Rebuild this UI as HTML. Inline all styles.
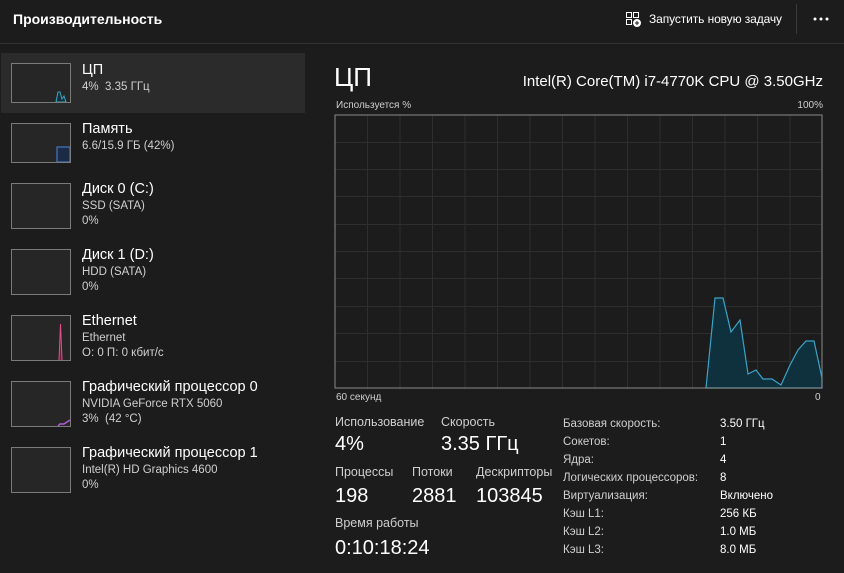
<!DOCTYPE html>
<html><head><meta charset="utf-8"><style>
*{margin:0;padding:0;box-sizing:border-box}
body{width:844px;height:573px;background:#1c1c1c;color:#fff;font-family:"Liberation Sans",sans-serif;position:relative;overflow:hidden}
.a{position:absolute;white-space:nowrap}
.th{position:absolute;left:11px;width:60px;border:1px solid #7a7a7a;background:#262626;overflow:hidden}
.t{font-size:14.5px;color:#fff}
.s{font-size:11.5px;color:#d0d0d0}
.lab{font-size:12.5px;color:#cfcfcf}
.big{font-size:20px;color:#fff}
.k{font-size:11.5px;color:#cfcfcf}
.v{font-size:11.5px;color:#fff}
</style></head><body>
<div class="a" style="left:13px;top:11px;font-size:14px;font-weight:bold">Производительность</div>
<div class="a" style="left:0;top:43px;width:844px;height:1px;background:#333"></div>
<svg class="a" style="left:625px;top:11px" width="16" height="16" viewBox="0 0 16 16" fill="none" stroke="#fff" stroke-width="1"><rect x="1.5" y="1.5" width="5" height="5"/><rect x="8.5" y="1.5" width="5" height="5"/><rect x="1.5" y="8.5" width="5" height="5"/><circle cx="12" cy="12" r="3.5" fill="#fff"/><path d="M12 10v4M10 12h4" stroke="#1c1c1c"/></svg>
<div class="a" style="left:649px;top:12px;font-size:12px;letter-spacing:-0.1px">Запустить новую задачу</div>
<div class="a" style="left:796px;top:4px;width:1px;height:30px;background:#3a3a3a"></div>
<svg class="a" style="left:812px;top:17px" width="20" height="4"><circle cx="3" cy="2" r="1.5" fill="#fff"/><circle cx="9" cy="2" r="1.5" fill="#fff"/><circle cx="15" cy="2" r="1.5" fill="#fff"/></svg>

<div class="a" style="left:1px;top:53px;width:304px;height:60px;background:#2b2b2b"></div>
<div class="th" style="top:63px;height:40px"><svg width="58" height="38" style="position:absolute;left:0;top:0"><path d="M44 38 L46 28 L48 28 L50 35 L52 32 L54 38 Z" fill="#12303a" stroke="#3aa3c8" stroke-width="1"/></svg></div>
<div class="a t" style="left:82px;top:62px">ЦП</div>
<div class="a s" style="left:82px;top:81px">4%&nbsp; 3.35 ГГц</div>

<div class="th" style="top:123px;height:40px"><svg width="58" height="38" style="position:absolute;left:0;top:0"><path d="M45 38 L45 23 L58 23 L58 38 Z" fill="#1b2a45" stroke="#4a86e0" stroke-width="1"/></svg></div>
<div class="a t" style="left:82px;top:121px">Память</div>
<div class="a s" style="left:82px;top:140px">6.6/15.9 ГБ (42%)</div>

<div class="th" style="top:183px;height:46px"></div>
<div class="a t" style="left:82px;top:181px">Диск 0 (C:)</div>
<div class="a s" style="left:82px;top:200px">SSD (SATA)</div>
<div class="a s" style="left:82px;top:215px">0%</div>

<div class="th" style="top:249px;height:46px"></div>
<div class="a t" style="left:82px;top:247px">Диск 1 (D:)</div>
<div class="a s" style="left:82px;top:266px">HDD (SATA)</div>
<div class="a s" style="left:82px;top:281px">0%</div>

<div class="th" style="top:315px;height:46px"><svg width="58" height="44" style="position:absolute;left:0;top:0"><path d="M47 44 L48.5 8 L50 44" fill="#6a1f3a" stroke="#e0508a" stroke-width="1"/></svg></div>
<div class="a t" style="left:82px;top:313px">Ethernet</div>
<div class="a s" style="left:82px;top:332px">Ethernet</div>
<div class="a s" style="left:82px;top:347px">О: 0 П: 0 кбит/с</div>

<div class="th" style="top:381px;height:46px"><svg width="58" height="44" style="position:absolute;left:0;top:0"><path d="M46 44 L48 42 L52 42 L55 40 L58 38" fill="none" stroke="#b45ad8" stroke-width="1.5"/></svg></div>
<div class="a t" style="left:82px;top:379px">Графический процессор 0</div>
<div class="a s" style="left:82px;top:398px">NVIDIA GeForce RTX 5060</div>
<div class="a s" style="left:82px;top:413px">3%&nbsp; (42 °C)</div>

<div class="th" style="top:447px;height:46px"></div>
<div class="a t" style="left:82px;top:445px">Графический процессор 1</div>
<div class="a s" style="left:82px;top:464px">Intel(R) HD Graphics 4600</div>
<div class="a s" style="left:82px;top:479px">0%</div>

<div class="a" style="left:334px;top:62px;font-size:26px">ЦП</div>
<div class="a" style="left:520px;top:73px;font-size:15px;width:303px;text-align:right">Intel(R) Core(TM) i7-4770K CPU @ 3.50GHz</div>
<div class="a" style="left:336px;top:100px;font-size:10px;color:#cfcfcf">Используется %</div>
<div class="a" style="left:780px;top:100px;font-size:10px;color:#cfcfcf;width:43px;text-align:right">100%</div>
<svg class="a" style="left:334px;top:114px" width="490" height="276">
<g stroke="#2e2e2e" stroke-width="1">
<path d="M33.5 1V275M66 1V275M98.5 1V275M131 1V275M163.5 1V275M196 1V275M228.5 1V275M261 1V275M293.5 1V275M326 1V275M358.5 1V275M391 1V275M423.5 1V275M456 1V275"/>
<path d="M1 28.5H488M1 55.5H488M1 82.5H488M1 110.5H488M1 137.5H488M1 164.5H488M1 192.5H488M1 219.5H488M1 247.5H488"/>
</g>
<path d="M372 274 L381 184 L389 184 L397 218 L406 206 L414 260 L422 256 L429 265 L438 265 L447 271 L456 251 L464 236 L472 227 L480 227 L488 264 L488 274 Z" fill="#0f313d" stroke="#3aa3c8" stroke-width="1.2"/>
<rect x="1" y="1" width="487" height="273" fill="none" stroke="#8a8a8a" stroke-width="1"/>
</svg>
<div class="a" style="left:336px;top:392px;font-size:10px;color:#cfcfcf">60 секунд</div>
<div class="a" style="left:815px;top:392px;font-size:10px;color:#cfcfcf">0</div>

<div class="a lab" style="left:335px;top:415px">Использование</div>
<div class="a lab" style="left:441px;top:415px">Скорость</div>
<div class="a big" style="left:335px;top:433px">4%</div>
<div class="a big" style="left:441px;top:433px">3.35 ГГц</div>
<div class="a lab" style="left:335px;top:465px">Процессы</div>
<div class="a lab" style="left:412px;top:465px">Потоки</div>
<div class="a lab" style="left:476px;top:465px">Дескрипторы</div>
<div class="a big" style="left:335px;top:485px">198</div>
<div class="a big" style="left:412px;top:485px">2881</div>
<div class="a big" style="left:476px;top:485px">103845</div>
<div class="a lab" style="left:335px;top:516px">Время работы</div>
<div class="a big" style="left:335px;top:537px">0:10:18:24</div>

<div class="a k" style="left:563px;top:415px;line-height:18px">Базовая скорость:<br>Сокетов:<br>Ядра:<br>Логических процессоров:<br>Виртуализация:<br>Кэш L1:<br>Кэш L2:<br>Кэш L3:</div>
<div class="a v" style="left:720px;top:415px;line-height:18px">3.50 ГГц<br>1<br>4<br>8<br>Включено<br>256 КБ<br>1.0 МБ<br>8.0 МБ</div>
</body></html>
